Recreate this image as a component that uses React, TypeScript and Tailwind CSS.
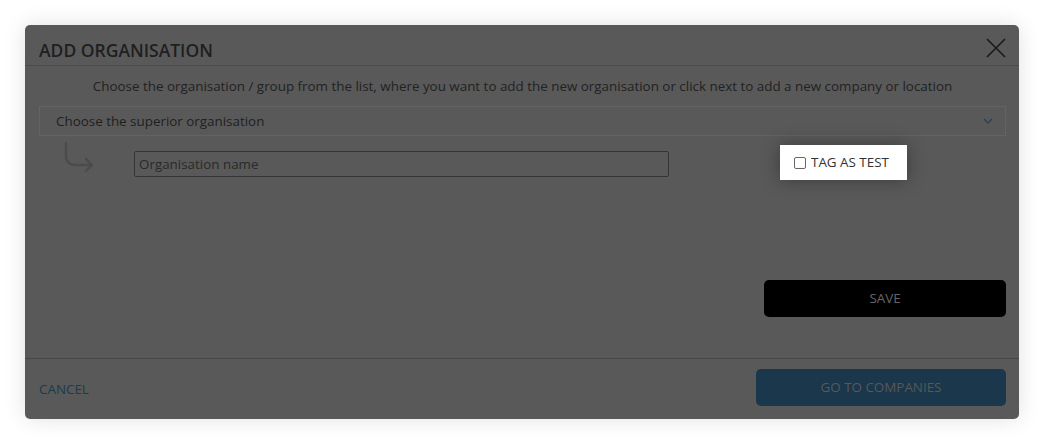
import React from "react";

const font = { fontFamily: '"Open Sans", "Noto Sans", sans-serif' };

const App = () => {
  return (
    <div className="w-[1044px] h-[445px] bg-white pt-[25px] pl-[25px]" style={font}>
      <div className="w-[994px] h-[394px] bg-[#595959] rounded-[5px] shadow-[0_0_22px_rgba(0,0,0,0.12)] flex flex-col text-[#1f1f1f]">
        {/* header */}
        <div className="h-[41px] flex items-end justify-between border-b border-[#4b4b4b] pl-[14px] pr-[12px]">
          <h2 className="text-[17.5px] font-semibold leading-none pb-[6px]">ADD ORGANISATION</h2>
          <button className="mb-[6px] text-[#1a1a1a]">
            <svg width="22" height="22" viewBox="0 0 22 22" stroke="currentColor" strokeWidth="1.6" fill="none">
              <path d="M2 2l18 18M20 2L2 20" />
            </svg>
          </button>
        </div>

        {/* body */}
        <div className="flex-1 flex flex-col pl-[14px] pr-[13px] border-b border-[#474747]">
          <p className="text-[13.4px] text-center mt-[11px] leading-[18px] text-[#222]">
            Choose the organisation / group from the list, where you want to add the new organisation or click next to add a new company or location
          </p>
          <div className="mt-[11px] h-[30px] border border-[#636363] flex items-center justify-between pl-[16px] pr-[12px]">
            <span className="text-[13.4px] text-[#1f1f1f]">Choose the superior organisation</span>
            <svg width="10" height="6" viewBox="0 0 10 6" fill="none" stroke="#2c3f55" strokeWidth="1.4">
              <path d="M1 1l4 4 4-4" />
            </svg>
          </div>

          <div className="flex items-start mt-[6px]">
            <svg className="ml-[24px]" width="32" height="30" viewBox="0 0 32 30" fill="none" stroke="#4b4b4b" strokeWidth="2.4" strokeLinecap="round" strokeLinejoin="round">
              <path d="M3 1v12c0 6 3 10 10 10h16" />
              <path d="M23 17l6 6-6 6" />
            </svg>
            <input
              placeholder="Organisation name"
              className="ml-[39px] mt-[9px] w-[535px] h-[26px] border border-[#343434] rounded-[2px] bg-transparent px-[4px] text-[13.4px] placeholder:text-[#2a2a2a] outline-none"
            />
            <div className="ml-[111px] mt-[3px] w-[127px] h-[35px] bg-white flex items-center pl-[14px] shadow-[0_0_18px_rgba(0,0,0,0.35)]">
              <span className="w-[12px] h-[12px] border border-[#666] rounded-[2px] bg-white"></span>
              <span className="ml-[5px] text-[13.4px] text-[#333]">TAG AS TEST</span>
            </div>
          </div>

          <div className="flex justify-end mt-[100px]">
            <button className="w-[242px] h-[37px] bg-black rounded-[5px] text-[13.4px] text-[#666]">SAVE</button>
          </div>
        </div>

        {/* footer */}
        <div className="h-[60px] flex items-start justify-between pl-[14px] pr-[13px] pt-[10px]">
          <button className="text-[13.4px] text-[#1b3b52] mt-[10px]">CANCEL</button>
          <button className="w-[250px] h-[37px] bg-[#1a374b] rounded-[5px] text-[13.4px] text-[#585858]">GO TO COMPANIES</button>
        </div>
      </div>
    </div>
  );
};

export default App;
